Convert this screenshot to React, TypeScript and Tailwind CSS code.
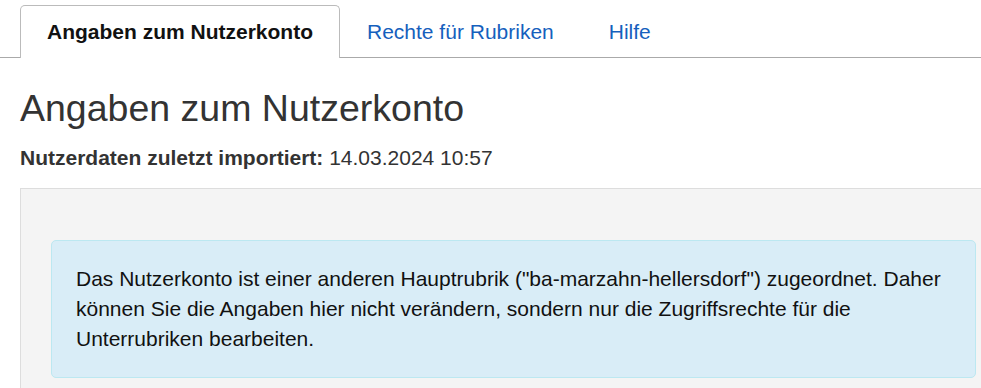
const font = { fontFamily: '"Liberation Sans", Arial, sans-serif' }

export default function App() {
  return (
    <div className="min-h-[388px] overflow-hidden bg-white" style={font}>
      {/* Tabs */}
      <div className="flex border-b border-[#aaaaaa] pl-5 pt-[5px]">
        <div className="-mb-px rounded-t-[5px] border border-b-0 border-[#bbbbbb] bg-white px-[26px] pt-[11px] pb-[10px] text-[21px] leading-[30px] font-bold text-[#111]">
          Angaben zum Nutzerkonto
        </div>
        <a href="#" className="px-[27px] pt-[12px] pb-[10px] text-[21px] leading-[30px] text-[#1560bd]">
          Rechte für Rubriken
        </a>
        <a href="#" className="px-[28px] pt-[12px] pb-[10px] text-[21px] leading-[30px] text-[#1560bd]">
          Hilfe
        </a>
      </div>

      <div className="px-5">
        <h1 className="mt-[30px] text-[37.5px] leading-[41px] text-[#333]">Angaben zum Nutzerkonto</h1>
        <p className="mt-[14px] text-[21px] leading-[30px] text-[#333]">
          <span className="font-bold">Nutzerdaten zuletzt importiert:</span> 14.03.2024 10:57
        </p>

        {/* Info panel */}
        <div className="mt-[15px] w-[987px] border border-[#dddddd] bg-[#f4f4f4] px-[30px] pt-[51px] pb-8">
          <div className="rounded-[5px] border border-[#bce8f1] bg-[#d9edf7] px-6 py-[23px] text-[21px] leading-[30px] text-[#111]">
            Das Nutzerkonto ist einer anderen Hauptrubrik ("ba-marzahn-hellersdorf") zugeordnet. Daher
            können Sie die Angaben hier nicht verändern, sondern nur die Zugriffsrechte für die
            Unterrubriken bearbeiten.
          </div>
        </div>
      </div>
    </div>
  )
}
